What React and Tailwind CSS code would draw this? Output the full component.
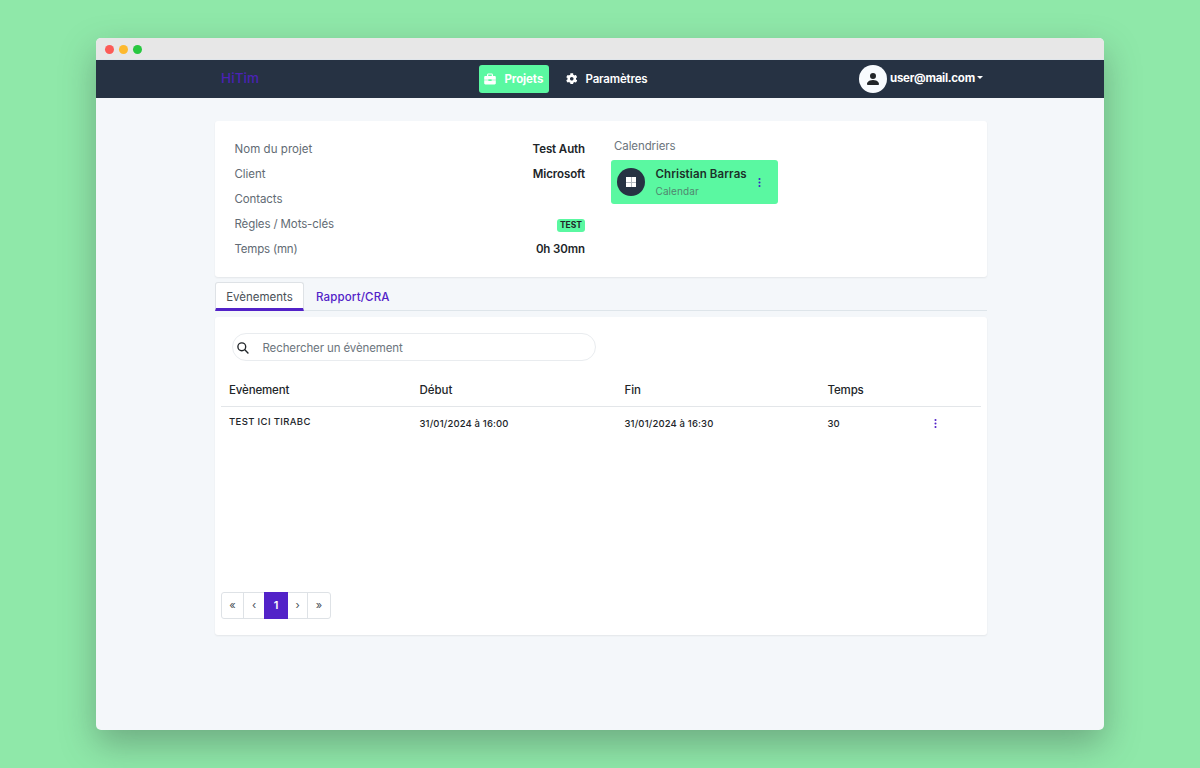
import React from "react";
import { FaCog } from "react-icons/fa";
import { BsPersonFill, BsThreeDotsVertical } from "react-icons/bs";

const details = [
  ["Nom du projet", "Test Auth", "tracking-[0.05px]"],
  ["Client", "Microsoft", "tracking-[-0.05px]"],
  ["Contacts", "", "tracking-[-0.1px]"],
  ["Règles / Mots-clés", "TEST", "tracking-[-0.12px]"],
  ["Temps (mn)", "0h 30mn", "tracking-[-0.2px]"],
];

function TitleBar() {
  return (
    <div className="flex h-[22px] items-center gap-[5px] border-b border-[#dfe5ea] bg-[#e7e7e7] pt-px pl-[9px]">
      <span className="size-[9px] rounded-full bg-[#fc5b57]" />
      <span className="size-[9px] rounded-full bg-[#fdb92e]" />
      <span className="size-[9px] rounded-full bg-[#28c840]" />
    </div>
  );
}

function Briefcase() {
  return (
    <svg viewBox="0 0 12 12" className="-mt-px size-3 fill-white">
      <path
        fillRule="evenodd"
        d="M3 2.900V1.900C3 1 3.600.4 4.500.4h3C8.400.4 9 1 9 1.900v1h1.600c.7 0 1.200.5 1.200 1.200v2.700H7.600v-.6H4.400v.6H.2V4.100c0-.7.500-1.200 1.200-1.200zM4.200 2.900h3.600V1.600H4.200z"
      />
      <path d="M.2 7.200h4.200v.7h3.200v-.7h4.200v3c0 .7-.5 1.200-1.200 1.200H1.400c-.7 0-1.200-.5-1.200-1.200z" />
    </svg>
  );
}

function NavBar() {
  return (
    <nav className="flex h-[38px] items-start bg-[#263243] pt-[5px] pl-[125px]">
      <div className="flex h-[26px] w-[258px] items-center text-[13.5px] font-medium tracking-[0.1px] text-[#4b22b5]">HiTim</div>
      <div className="flex h-7 w-[70px] items-center rounded-[3px] bg-[#5af8a1] pl-[5px] text-[11.5px] font-bold tracking-[-0.1px] text-white">
        <Briefcase />
        <span className="mt-px ml-[8.5px]">Projets</span>
      </div>
      <div className="flex h-7 w-[310px] items-center pl-[16.5px] text-[11.5px] font-semibold tracking-[-0.17px] text-white">
        <FaCog className="-mt-px size-[11.500px]" />
        <span className="mt-px ml-[8.5px]">Paramètres</span>
      </div>
      <div className="flex h-7 items-center text-[11.5px] font-bold tracking-[-0.27px] text-white">
        <span className="-mt-px flex size-7 items-center justify-center rounded-full bg-[#f8fbfe] text-[#212529]">
          <BsPersonFill className="size-4" />
        </span>
        <span className="-mt-px ml-[3px]">user@mail.com</span>
        <svg viewBox="0 0 6 3" className="-mt-[3px] ml-[2.5px] h-[3px] w-[6px] fill-white">
          <path d="M0 0h6L3 3z" />
        </svg>
      </div>
    </nav>
  );
}

function ProjectCard() {
  return (
    <section className="flex h-[156px] rounded-[3px] bg-white shadow-[0_1px_2px_rgba(0,0,0,0.07)]">
      <dl className="w-[370px] pt-4 pl-[19.5px] text-[11.5px]">
        {details.map(([label, value, tracking]) => (
          <div key={label} className="flex h-[25px] items-center justify-between">
            <dt className={`text-[#626b74] ${tracking}`}>{label}</dt>
            {value === "TEST" ? (
              <dd className="mt-px flex h-[13px] items-center rounded-[3px] bg-[#5af8a1] px-[3px] text-[8.5px] font-bold text-[#212529]">{value}</dd>
            ) : (
              <dd className="font-semibold tracking-[-0.1px] text-[#212529]">{value}</dd>
            )}
          </div>
        ))}
      </dl>
      <div className="ml-[26px] pt-[17px]">
        <h2 className="ml-[3px] h-4 text-[11.5px] leading-4 tracking-[-0.1px] text-[#6c757d]">Calendriers</h2>
        <div className="mt-[6px] flex h-11 w-[167px] items-center rounded-[3px] bg-[#5af8a1] pl-[6px]">
          <span className="flex size-7 items-center justify-center rounded-full bg-[#263243]">
            <span className="grid size-[10px] grid-cols-2 gap-px bg-[#b4bac1]">
              <i className="bg-white" />
              <i className="bg-white" />
              <i className="bg-white" />
              <i className="bg-white" />
            </span>
          </span>
          <div className="ml-[10.5px] w-[98px] whitespace-nowrap">
            <p className="text-[11.5px] leading-[17px] font-semibold tracking-[0.12px] text-[#1c3029]">Christian Barras</p>
            <p className="text-[10px] leading-4 tracking-[0.08px] text-[#51866f]">Calendar</p>
          </div>
          <BsThreeDotsVertical className="mt-px size-[11px] text-[#3b24c4]" />
        </div>
      </div>
    </section>
  );
}

function Tabs() {
  return (
    <div className="mt-[5px] flex h-[29px] border-b border-[#dee5ea] text-[11.5px]">
      <div className="flex h-[29px] w-[89px] items-center justify-center rounded-t-[3px] border border-b-3 border-[#dee2e6] border-b-[#5222c8] bg-white pt-[5px] text-[#495057]">Evènements</div>
      <div className="flex items-center pt-[3px] pl-3 font-medium tracking-[0.15px] text-[#5222c8]">Rapport/CRA</div>
    </div>
  );
}

function Events() {
  return (
    <section className="mt-[6px] flex h-[318px] flex-col rounded-[3px] bg-white px-[6px] pt-4 shadow-[0_1px_2px_rgba(0,0,0,0.07)]">
      <div className="ml-[10.5px] flex h-7 w-[364px] items-center rounded-full border border-[#e9ecef] pl-1 text-[11.5px] text-[#6c757d]">
        <svg viewBox="0 0 12 12" className="mt-px size-3 fill-none stroke-[#212529] stroke-[1.35]">
          <circle cx="4.8" cy="4.8" r="3.9" />
          <path d="M7.6 7.6l3.8 3.8" />
        </svg>
        <span className="mt-[3px] ml-[14px] tracking-[-0.12px]">Rechercher un évènement</span>
      </div>
      <div className="mt-3 grid h-[34px] grid-cols-[190.500px_205px_204px_101.500px_1fr] items-center border-b border-[#e3e6e9] pt-[2px] pl-2 text-[11.5px] font-medium tracking-[-0.15px] text-[#212529]">
        <span>Evènement</span>
        <span className="tracking-[-0.05px]">Début</span>
        <span>Fin</span>
        <span className="-ml-px">Temps</span>
      </div>
      <div className="grid h-[33px] grid-cols-[190.500px_205px_204px_101.500px_1fr] items-center pl-2 text-[9.5px] font-medium tracking-[0.15px] text-[#212529]">
        <span className="-mt-[3px] tracking-[0.36px]">TEST ICI TIRABC</span>
        <span className="mt-px">31/01/2024 à 16:00</span>
        <span className="mt-px">31/01/2024 à 16:30</span>
        <span className="mt-px -ml-px">30</span>
        <BsThreeDotsVertical className="size-[11px] text-[#5222c8]" />
      </div>
      <div className="mt-auto mb-4 flex h-[27px] w-[110px] rounded-[3px] border border-[#dee2e6] text-[11px] text-[#495057]">
        <span className="flex w-[22px] items-center justify-center border-r border-[#dee2e6]">«</span>
        <span className="flex w-5 items-center justify-center">‹</span>
        <span className="-my-px flex w-6 items-center justify-center bg-[#5222c8] font-semibold text-white">1</span>
        <span className="flex w-5 items-center justify-center border-r border-[#dee2e6]">›</span>
        <span className="flex w-[22px] items-center justify-center">»</span>
      </div>
    </section>
  );
}

export default function App() {
  return (
    <div className="h-[768px] w-[1200px] overflow-hidden bg-[#8fe8a9] px-24 pt-[38px] font-['Inter',sans-serif]">
      <div className="h-[692px] overflow-hidden rounded-[5px] bg-[#f4f7fa] shadow-[0_14px_35px_rgba(60,80,70,0.4)]">
        <TitleBar />
        <NavBar />
        <main className="mt-[23px] ml-[119px] w-[772px]">
          <ProjectCard />
          <Tabs />
          <Events />
        </main>
      </div>
    </div>
  );
}
